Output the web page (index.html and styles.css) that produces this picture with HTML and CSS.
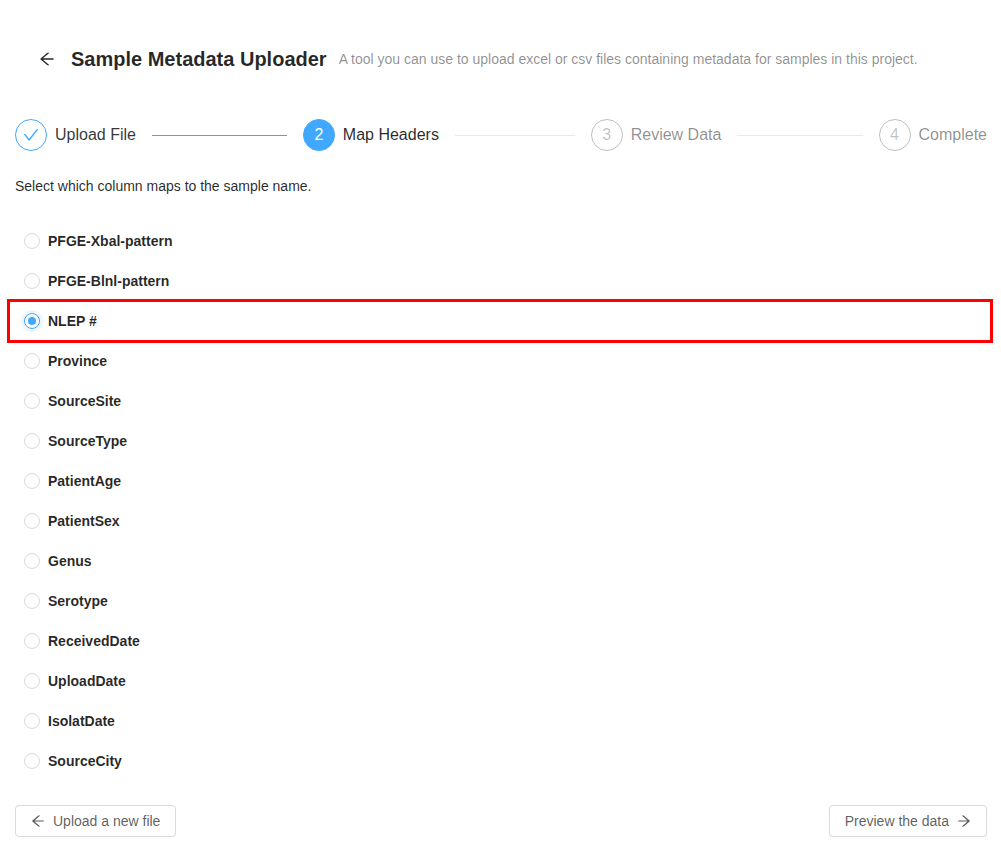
FILE: index.html
```html
<!DOCTYPE html>
<html lang="en">
<head>
<meta charset="utf-8">
<title>Sample Metadata Uploader</title>
<link rel="stylesheet" href="styles.css">
</head>
<body>
<div class="page">
  <header class="page-header">
    <span class="back">
      <svg viewBox="64 64 896 896" width="16" height="16" fill="currentColor"><path d="M872 474H286.9l350.3-304.2c5.6-4.9 2.2-14.1-5.2-14.1h-88.5c-3.9 0-7.6 1.4-10.5 3.9L155 487.8a31.96 31.96 0 000 48.3L535.1 866c1.5 1.3 3.3 2 5.2 2h91.5c7.4 0 10.8-9.2 5.2-14.1L286.9 550H872c4.4 0 8-3.6 8-8v-60c0-4.4-3.6-8-8-8z"/></svg>
    </span>
    <h1 class="title">Sample Metadata Uploader</h1>
    <span class="subtitle">A tool you can use to upload excel or csv files containing metadata for samples in this project.</span>
  </header>

  <div class="steps">
    <div class="step finish">
      <div class="step-icon">
        <svg viewBox="64 64 896 896" width="16" height="16" fill="currentColor"><path d="M912 190h-69.9c-9.8 0-19.1 4.5-25.1 12.2L404.7 724.5 207 474a32 32 0 00-25.1-12.2H112c-6.7 0-10.4 7.7-6.3 12.9l273.9 347c12.8 16.2 37.4 16.2 50.3 0l488.4-618.9c4.1-5.1.4-12.8-6.3-12.8z"/></svg>
      </div>
      <div class="step-title">Upload File</div>
    </div>
    <div class="step process">
      <div class="step-icon">2</div>
      <div class="step-title">Map Headers</div>
    </div>
    <div class="step wait">
      <div class="step-icon">3</div>
      <div class="step-title">Review Data</div>
    </div>
    <div class="step wait last">
      <div class="step-icon">4</div>
      <div class="step-title">Complete</div>
    </div>
  </div>

  <p class="intro">Select which column maps to the sample name.</p>

  <div class="radio-list">
    <label class="radio-row"><span class="radio"></span><span class="radio-label">PFGE-Xbal-pattern</span></label>
    <label class="radio-row"><span class="radio"></span><span class="radio-label">PFGE-Blnl-pattern</span></label>
    <label class="radio-row selected"><span class="radio checked"></span><span class="radio-label">NLEP #</span></label>
    <label class="radio-row"><span class="radio"></span><span class="radio-label">Province</span></label>
    <label class="radio-row"><span class="radio"></span><span class="radio-label">SourceSite</span></label>
    <label class="radio-row"><span class="radio"></span><span class="radio-label">SourceType</span></label>
    <label class="radio-row"><span class="radio"></span><span class="radio-label">PatientAge</span></label>
    <label class="radio-row"><span class="radio"></span><span class="radio-label">PatientSex</span></label>
    <label class="radio-row"><span class="radio"></span><span class="radio-label">Genus</span></label>
    <label class="radio-row"><span class="radio"></span><span class="radio-label">Serotype</span></label>
    <label class="radio-row"><span class="radio"></span><span class="radio-label">ReceivedDate</span></label>
    <label class="radio-row"><span class="radio"></span><span class="radio-label">UploadDate</span></label>
    <label class="radio-row"><span class="radio"></span><span class="radio-label">IsolatDate</span></label>
    <label class="radio-row"><span class="radio"></span><span class="radio-label">SourceCity</span></label>
  </div>

  <div class="footer">
    <button class="btn">
      <svg viewBox="64 64 896 896" width="14" height="14" fill="currentColor"><path d="M872 474H286.9l350.3-304.2c5.6-4.9 2.2-14.1-5.2-14.1h-88.5c-3.9 0-7.6 1.4-10.5 3.9L155 487.8a31.96 31.96 0 000 48.3L535.1 866c1.5 1.3 3.3 2 5.2 2h91.5c7.4 0 10.8-9.2 5.2-14.1L286.9 550H872c4.4 0 8-3.6 8-8v-60c0-4.4-3.6-8-8-8z"/></svg>
      <span>Upload a new file</span>
    </button>
    <button class="btn">
      <span>Preview the data</span>
      <svg viewBox="64 64 896 896" width="14" height="14" fill="currentColor"><path d="M869 487.8L491.2 159.9c-2.9-2.5-6.6-3.9-10.5-3.9h-88.5c-7.4 0-10.8 9.2-5.2 14.1L737.6 474H152c-4.4 0-8 3.6-8 8v60c0 4.4 3.6 8 8 8h585.5L386.9 853.9c-5.6 4.9-2.2 14.1 5.2 14.1h91.5c1.9 0 3.8-.7 5.2-2L869 536.2a32.07 32.07 0 000-48.4z"/></svg>
    </button>
  </div>
</div>
</body>
</html>
```

FILE: styles.css
```css
* { box-sizing: border-box; }

html, body {
  margin: 0;
  padding: 0;
  background: #fff;
}

body {
  font-family: "Liberation Sans", Arial, sans-serif;
  font-size: 14px;
  color: rgba(0, 0, 0, 0.65);
}

.page {
  padding: 0 14px 0 15px;
}

.page-header {
  display: flex;
  align-items: center;
  padding: 43px 24px 0;
  height: 75px;
}

.back {
  display: flex;
  align-items: center;
  width: 16px;
  height: 16px;
  margin-right: 16px;
  color: rgba(0, 0, 0, 0.85);
}

.title {
  margin: 0;
  font-size: 20px;
  line-height: 32px;
  font-weight: 700;
  color: rgba(0, 0, 0, 0.85);
}

.subtitle {
  margin-left: 12px;
  font-size: 14px;
  line-height: 22px;
  color: rgba(0, 0, 0, 0.45);
}

.steps {
  display: flex;
  margin-top: 44px;
}

.step {
  flex: 1;
  display: flex;
  align-items: flex-start;
  margin-right: 16px;
  overflow: hidden;
  white-space: nowrap;
}

.step.last {
  flex: none;
  margin-right: 0;
}

.step-icon {
  flex: none;
  width: 32px;
  height: 32px;
  border-radius: 50%;
  border: 1px solid rgba(0, 0, 0, 0.25);
  display: flex;
  align-items: center;
  justify-content: center;
  font-size: 16px;
  line-height: 1;
  margin-right: 8px;
  color: rgba(0, 0, 0, 0.25);
}

.step-title {
  position: relative;
  font-size: 16px;
  line-height: 32px;
  padding-right: 16px;
  color: rgba(0, 0, 0, 0.45);
}

.step-title::after {
  content: "";
  position: absolute;
  top: 16px;
  left: 100%;
  width: 9999px;
  height: 1px;
  background: #e8e8e8;
}

.step.last .step-title { padding-right: 0; }
.step.last .step-title::after { display: none; }

.step.finish .step-icon {
  border-color: #40a9ff;
  color: #40a9ff;
}

.step.finish .step-title {
  color: rgba(0, 0, 0, 0.8);
}

.step.finish .step-title::after {
  background: #40a9ff;
}

.step.process .step-icon {
  background: #40a9ff;
  border-color: #40a9ff;
  color: #fff;
}

.step.process .step-title {
  color: rgba(0, 0, 0, 0.85);
}

.intro {
  margin: 24px 0 0;
  line-height: 22px;
  color: rgba(0, 0, 0, 0.85);
}

.radio-list {
  display: flex;
  flex-direction: column;
  margin: 24px -4px 0 -6px;
}

.radio-row {
  display: flex;
  align-items: center;
  height: 40px;
  padding-left: 15px;
  cursor: pointer;
}

.radio-row.selected {
  outline: 3px solid #ff0000;
  outline-offset: -1px;
}

.radio {
  width: 16px;
  height: 16px;
  border-radius: 50%;
  border: 1px solid #d9d9d9;
  background: #fff;
  display: flex;
  align-items: center;
  justify-content: center;
  flex: none;
}

.radio.checked {
  border-color: #40a9ff;
  box-shadow: 0 0 0 3px rgba(24, 144, 255, 0.08);
}

.radio.checked::after {
  content: "";
  width: 8px;
  height: 8px;
  border-radius: 50%;
  background: #40a9ff;
}

.radio-label {
  margin-left: 8px;
  font-weight: 700;
  color: rgba(0, 0, 0, 0.85);
  line-height: 22px;
}

.footer {
  display: flex;
  justify-content: space-between;
  margin-top: 24px;
}

.btn {
  display: inline-flex;
  align-items: center;
  gap: 8px;
  height: 32px;
  padding: 0 15px;
  font-family: inherit;
  font-size: 14px;
  color: rgba(0, 0, 0, 0.65);
  background: #fff;
  border: 1px solid #d9d9d9;
  border-radius: 4px;
  box-shadow: 0 2px 0 rgba(0, 0, 0, 0.015);
}
```
